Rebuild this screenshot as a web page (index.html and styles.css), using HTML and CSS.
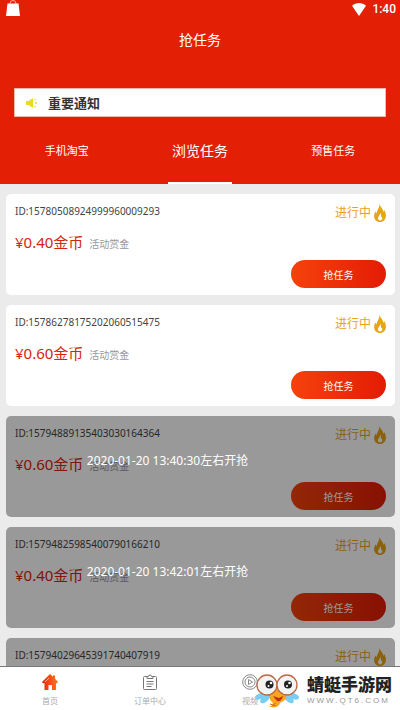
FILE: index.html
```html
<!DOCTYPE html>
<html lang="zh-CN">
<head>
<meta charset="utf-8">
<meta name="viewport" content="width=device-width, initial-scale=1">
<title>抢任务</title>
<link rel="stylesheet" href="styles.css">
</head>
<body>
<svg class="defs" aria-hidden="true">
  <symbol id="flame" viewBox="0 0 12 18">
    <path fill="#e6a417" fill-rule="evenodd" d="M5.400 0C6.200 3 9 4.400 9.400 7.700c.5-.5.7-1 .7-1.700C11.500 8 12 10 11.900 12c-.2 3.600-2.600 6-5.900 6S.1 15.600.1 12.200C0 9.800 1 8.300 2 7.200c0 1 .2 1.700.8 2.200C2.700 6 5.700 4 5.400 0zM6.200 9c0 2.300-2.200 3.300-2.200 5.200 0 1.400.9 2.200 2.100 2.200s2.200-.8 2.200-2.200c0-.8-.2-1.300-.6-1.800-.2.500-.4.800-.8.900C7.300 11.600 7 10 6.200 9z"/>
  </symbol>
</svg>
<header class="top">
  <div class="status">
    <svg class="bag" viewBox="0 0 14 16"><path d="M4 5V3.500a3 3 0 0 1 6 0V5" fill="none" stroke="#f7b0a0"/><path d="M1.500 3.500h11L14 16H0z" fill="#fff"/></svg>
    <span class="signal">
      <svg class="wifi" viewBox="0 0 14 13"><path d="M0 2.800C4-.8 10-.8 14 2.800L7 13z" fill="#fff"/></svg>
      <span>1:40</span>
    </span>
  </div>
  <h1 class="title">抢任务</h1>
  <div class="notice">
    <svg class="speaker" viewBox="0 0 12 12"><path d="M0 4h2.500L7 1v10L2.500 8H0z" fill="#e6dc20"/><path d="M8.500 3l1-1M9 6h2M8.500 9l1 1" stroke="#e6dc20" stroke-width="1.300"/></svg>
    <strong>重要通知</strong>
  </div>
  <nav class="tabs">
    <a href="#">手机淘宝</a>
    <a href="#" class="active">浏览任务</a>
    <a href="#">预售任务</a>
  </nav>
</header>
<main class="list">
  <article class="card">
    <div class="row"><span class="id">ID:15780508924999960009293</span><span class="state">进行中<svg class="flame"><use href="#flame"/></svg></span></div>
    <div class="reward"><span class="price">¥0.40金币</span><span class="label">活动赏金</span></div>
    <button class="grab" type="button">抢任务</button>
  </article>
  <article class="card">
    <div class="row"><span class="id">ID:15786278175202060515475</span><span class="state">进行中<svg class="flame"><use href="#flame"/></svg></span></div>
    <div class="reward"><span class="price">¥0.60金币</span><span class="label">活动赏金</span></div>
    <button class="grab" type="button">抢任务</button>
  </article>
  <article class="card">
    <div class="row"><span class="id">ID:15794889135403030164364</span><span class="state">进行中<svg class="flame"><use href="#flame"/></svg></span></div>
    <div class="reward"><span class="price">¥0.60金币</span><span class="label">活动赏金</span></div>
    <button class="grab" type="button">抢任务</button>
    <div class="mask">2020-01-20 13:40:30左右开抢</div>
  </article>
  <article class="card">
    <div class="row"><span class="id">ID:15794825985400790166210</span><span class="state">进行中<svg class="flame"><use href="#flame"/></svg></span></div>
    <div class="reward"><span class="price">¥0.40金币</span><span class="label">活动赏金</span></div>
    <button class="grab" type="button">抢任务</button>
    <div class="mask">2020-01-20 13:42:01左右开抢</div>
  </article>
  <article class="card">
    <div class="row"><span class="id">ID:15794029645391740407919</span><span class="state">进行中<svg class="flame"><use href="#flame"/></svg></span></div>
    <div class="mask"></div>
  </article>
</main>
<nav class="bottom">
  <a href="#">
    <svg viewBox="0 0 16 16"><defs><linearGradient id="home"><stop offset="0" stop-color="#e3240c"/><stop offset="1" stop-color="#ff7a1a"/></linearGradient></defs><path fill="url(#home)" d="M8 0l3 2.700V1.500h2v3L16 8l-1 1.200h-1V16h-4v-5H6.500v5H2.500V9.200H1L0 8z"/><path d="M3 8l4-4" stroke="#ffb49a"/></svg>
    <span>首页</span>
  </a>
  <a href="#">
    <svg viewBox="0 0 16 16" fill="none" stroke="#777"><path d="M5 2.500H2.500q-1 0-1 1v11q0 1 1 1h11q1 0 1-1v-11q0-1-1-1H11M5 4.500v-2h1.500a1.500 1.500 0 0 1 3 0H11v2zM4.500 7.500h7M4.500 10h7M4.500 12.500h5"/></svg>
    <span>订单中心</span>
  </a>
  <a href="#">
    <svg viewBox="0 0 16 16" fill="none" stroke="#888"><circle cx="8" cy="8" r="7.300"/><circle cx="8" cy="8" r="5"/><path d="M6.500 5.500v5l4-2.500z"/></svg>
    <span>视频</span>
  </a>
  <a href="#" class="faint" aria-label="我的">
    <svg viewBox="0 0 16 16" fill="none" stroke="#888"><circle cx="8" cy="5" r="3.500"/><path d="M2 15c0-7 12-7 12 0z"/></svg>
  </a>
  <div class="brand">
    <svg viewBox="0 0 46 34">
      <g fill="#79cdf3"><path d="M14 18C7 18 0 21 1 24s6 1 6 1c-2 3 0 5 3 4s6-5 8-8z"/><path d="M32 18c7 0 14 3 13 6s-6 1-6 1c2 3 0 5-3 4s-6-5-8-8z"/></g>
      <path d="M12 18l7 7h8l8-7z" fill="#1768b5"/>
      <path d="M23 15c5 1 11 6 9 10-2 2-5 3-6 4-1 4-6 6-11 3 3 0 5-2 3-4-4-3-3-10 5-13z" fill="#f9a51d"/>
      <path d="M19 22l6 2 4-2c-1 4-3 6-6 5z" fill="#bd301d"/>
      <path d="M16 30l6 2M18 32l4-3" stroke="#df6921"/>
      <g fill="#f4f4f4" stroke="#bd6842" stroke-width="1.300"><circle cx="13" cy="11" r="10"/><circle cx="33" cy="11" r="10"/></g>
      <g fill="#222"><circle cx="15.500" cy="10.500" r="4"/><circle cx="34" cy="10.500" r="4"/></g>
      <g fill="#fff"><circle cx="17" cy="9" r="1.300"/><circle cx="35.500" cy="9" r="1.300"/><circle cx="14.500" cy="12" r="1"/><circle cx="33" cy="12" r="1"/></g>
    </svg>
    <div class="words"><b>蜻蜓手游网</b><small>WWW.QT6.COM</small></div>
  </div>
</nav>
</body>
</html>
```
FILE: styles.css
```css
* { box-sizing: border-box; }
html, body { height: 100%; }
body {
  margin: 0;
  display: flex;
  flex-direction: column;
  overflow: hidden;
  background: #ebebeb;
  color: #444;
  font-family: "Noto Sans", "Noto Sans CJK SC", sans-serif;
}
a { color: inherit; text-decoration: none; }
.defs { position: absolute; width: 0; height: 0; }

.top { flex: none; background: #e32005; color: #fff; }
.status {
  display: flex;
  justify-content: space-between;
  height: 20px;
  padding: 0 4px 0 6px;
}
.bag { width: 14px; height: 16px; }
.signal {
  display: flex;
  align-items: center;
  gap: 6px;
  height: 18px;
  font: 500 12px/18px Roboto, sans-serif;
}
.wifi { width: 14px; height: 13px; }
.title {
  margin: 8px 0 36px;
  font-size: 14px;
  font-weight: 400;
  line-height: 24px;
  text-align: center;
}
.notice {
  display: flex;
  align-items: center;
  gap: 10px;
  height: 29px;
  margin: 0 14px;
  padding: 0 11px;
  background: #fff;
  border: 1px solid #f3b9a6;
  color: #333;
  font-size: 13px;
}
.speaker { width: 12px; height: 12px; }
.tabs { display: grid; grid-template-columns: repeat(3, 1fr); height: 67px; }
.tabs a {
  justify-self: center;
  width: 64px;
  height: 67px;
  padding-top: 4px;
  font-size: 11px;
  line-height: 60px;
  text-align: center;
}
.tabs .active { font-size: 14px; border-bottom: 2px solid #fff; }

.list {
  flex: 1;
  min-height: 0;
  overflow: hidden;
  display: flex;
  flex-direction: column;
  gap: 10px;
  padding: 10px 5px 0 6px;
}
.card {
  position: relative;
  flex: none;
  display: flex;
  flex-direction: column;
  height: 101px;
  padding: 7px 9px;
  background: #fff;
  border-radius: 5px;
  overflow: hidden;
}
.row { display: flex; justify-content: space-between; height: 24px; }
.id { font-size: 10px; line-height: 20px; }
.state {
  display: flex;
  align-items: center;
  gap: 3px;
  color: #e6a417;
  font-size: 12px;
  line-height: 24px;
}
.flame { width: 12px; height: 18px; }
.reward { display: flex; align-items: baseline; gap: 6px; height: 35px; line-height: 34px; }
.price { color: #d8230d; font-size: 15px; }
.label { color: #999; font-size: 10px; }
.grab {
  flex: none;
  align-self: flex-end;
  width: 95px;
  height: 28px;
  padding: 0;
  border: 0;
  border-radius: 14px;
  background: linear-gradient(90deg, #f5420c, #e31c04);
  color: #fff;
  font: inherit;
  font-size: 10px;
}
.mask {
  position: absolute;
  inset: 0;
  padding: 0 66px 14px 0;
  display: flex;
  align-items: center;
  justify-content: center;
  background: rgba(0, 0, 0, .4);
  color: #fff;
  font-size: 12px;
}

.bottom {
  position: relative;
  flex: none;
  display: grid;
  grid-template-columns: repeat(4, 1fr);
  height: 43px;
  padding-top: 7px;
  background: #fff;
  color: #aaa;
  font-size: 8px;
  line-height: 16px;
  box-shadow: 0 -1px 0 #777;
}
.bottom a { display: flex; flex-direction: column; align-items: center; gap: 3px; }
.bottom a svg { width: 16px; height: 16px; }
.bottom .faint { opacity: .2; }
.brand {
  position: absolute;
  right: 8px;
  bottom: 2px;
  display: flex;
  align-items: center;
  gap: 7px;
}
.brand svg { width: 46px; height: 34px; }
.words { display: flex; flex-direction: column; color: #222; }
.words b { font-size: 17px; line-height: 20px; font-weight: 900; }
.words small {
  color: #999;
  font: 8px/12px "Liberation Sans", sans-serif;
  letter-spacing: 2px;
}
```
